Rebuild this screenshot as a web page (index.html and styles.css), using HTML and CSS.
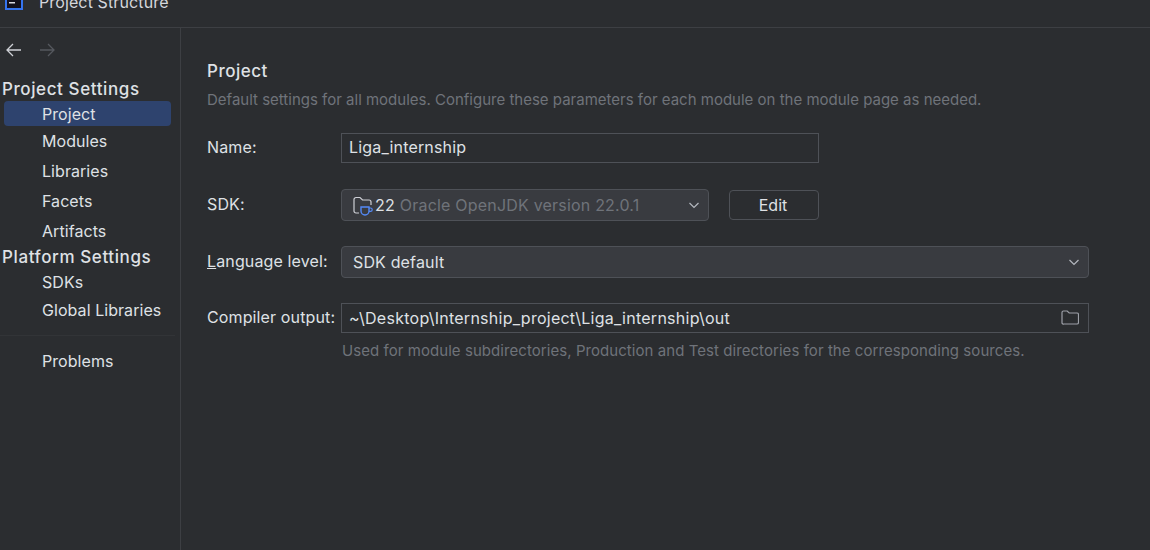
FILE: index.html
```html
<!DOCTYPE html>
<html lang="en">
<head>
    <meta charset="UTF-8">
    <meta name="viewport" content="width=device-width, initial-scale=1.0">
    <title>Project Structure</title>
    <link rel="stylesheet" href="styles.css">
</head>
<body>
    <header class="title-bar">
        <svg class="app-icon" width="18" height="18" viewBox="0 0 18 18">
            <rect x="1" y="1" width="16" height="16" fill="#14101c" stroke="#3574f0" stroke-width="2"/>
            <rect x="4" y="3" width="3" height="3" fill="#d8d8e0"/>
            <rect x="8" y="3" width="3" height="3" fill="#d8d8e0"/>
            <rect x="4" y="10" width="6" height="1.500" fill="#d8d8e0"/>
        </svg>
        <span class="title-text">Project Structure</span>
    </header>

    <div class="dialog">
        <aside class="sidebar">
            <div class="history">
                <svg width="18" height="18" viewBox="0 0 18 18" fill="none" stroke="#cfd1d6" stroke-width="1.3">
                    <path d="M16 9H2M8 3L2 9l6 6"/>
                </svg>
                <svg width="18" height="18" viewBox="0 0 18 18" fill="none" stroke="#55585e" stroke-width="1.3">
                    <path d="M2 9h14M10 3l6 6-6 6"/>
                </svg>
            </div>
            <h2 class="group-title">Project Settings</h2>
            <a class="nav-item selected">Project</a>
            <a class="nav-item">Modules</a>
            <a class="nav-item">Libraries</a>
            <a class="nav-item">Facets</a>
            <a class="nav-item">Artifacts</a>
            <h2 class="group-title platform-title">Platform Settings</h2>
            <a class="nav-item tight first-tight">SDKs</a>
            <a class="nav-item tight">Global Libraries</a>
            <hr class="nav-sep">
            <a class="nav-item">Problems</a>
        </aside>

        <main class="content">
            <h1 class="page-title">Project</h1>
            <p class="hint">Default settings for all modules. Configure these parameters for each module on the module page as needed.</p>

            <div class="form">
                <label class="row-label row-name name-label">Name:</label>
                <div class="field row-name name-field">Liga_internship</div>

                <label class="row-label row-sdk">SDK:</label>
                <div class="sdk-line row-sdk">
                    <div class="combo sdk-combo">
                        <svg class="sdk-icon" width="22" height="20" viewBox="0 0 22 20" fill="none">
                            <path d="M6 18H3a2 2 0 0 1-2-2V4.500a2 2 0 0 1 2-2h4l2.500 2.500H16a2 2 0 0 1 2 2V10" stroke="#ced0d6" stroke-width="1.200"/>
                            <path d="M8 12h8v4a4 4 0 0 1-4 4a4 4 0 0 1-4-4z" fill="#393b40" stroke="#548af7" stroke-width="1.400"/>
                            <path d="M16 13h1.500a1.700 1.700 0 0 1 0 3.400H16" stroke="#548af7" stroke-width="1.200"/>
                        </svg>
                        <span class="sdk-version">22</span>
                        <span class="sdk-name">Oracle OpenJDK version 22.0.1</span>
                        <svg class="chevron" width="12" height="12" viewBox="0 0 12 12" fill="none" stroke="#b4b8bf" stroke-width="1.200">
                            <path d="M1.500 4l4.500 4.500L10.500 4"/>
                        </svg>
                    </div>
                    <button class="edit-button">Edit</button>
                </div>

                <label class="row-label row-lang"><u>L</u>anguage level:</label>
                <div class="combo row-lang lang-combo">
                    <span>SDK default</span>
                    <svg class="chevron" width="12" height="12" viewBox="0 0 12 12" fill="none" stroke="#b4b8bf" stroke-width="1.200">
                        <path d="M1.500 4l4.500 4.500L10.500 4"/>
                    </svg>
                </div>

                <label class="row-label row-out">Compiler output:</label>
                <div class="field row-out out-field">
                    <span>~\Desktop\Internship_project\Liga_internship\out</span>
                    <svg width="18" height="18" viewBox="0 0 18 18" fill="none" stroke="#9da0a8" stroke-width="1.200">
                        <path d="M1 3.500A1.500 1.500 0 0 1 2.500 2h3.700l2 2h7.800a1.500 1.500 0 0 1 1.500 1.500v8a1.500 1.500 0 0 1-1.500 1.500h-13A1.500 1.500 0 0 1 1 14z"/>
                    </svg>
                </div>

                <p class="hint out-hint">Used for module subdirectories, Production and Test directories for the corresponding sources.</p>
            </div>
        </main>
    </div>
</body>
</html>
```

FILE: styles.css
```css
html, body {
    height: 100%;
}
body {
    margin: 0;
    overflow: hidden;
    background-color: #2b2d30;
    color: #dfe1e5;
    font-family: Inter, "Noto Sans", sans-serif;
    font-size: 16px;
    display: flex;
    flex-direction: column;
}
.title-bar {
    height: 27px;
    flex: none;
    display: flex;
    align-items: flex-start;
    gap: 16px;
    padding-left: 5px;
    border-bottom: 1px solid #3d3f43;
    overflow: hidden;
}
.app-icon {
    flex: none;
    margin-top: -8px;
}
.title-text {
    margin-top: -8px;
    font-size: 16px;
    line-height: 20px;
    letter-spacing: 0.12px;
    color: #d5d7dc;
}
.dialog {
    flex: 1;
    display: flex;
    min-height: 0;
}
.sidebar {
    width: 181px;
    flex: none;
    box-sizing: border-box;
    border-right: 1px solid #3d3f43;
    padding: 12px 9px 0 4px;
    display: flex;
    flex-direction: column;
}
.history {
    height: 20px;
    display: flex;
    align-items: center;
    gap: 15px;
    margin-bottom: 19px;
    padding-left: 1px;
}
.group-title {
    margin: 0 0 0 -2px;
    font-size: 17px;
    font-weight: 500;
    line-height: 20px;
    height: 20px;
    letter-spacing: 0.6px;
    color: #dfe1e5;
}
.platform-title {
    margin-top: 1px;
}
.nav-item {
    height: 30px;
    line-height: 30px;
    padding-left: 38px;
    letter-spacing: 0.06px;
    color: #dfe1e5;
    border-radius: 4px;
    white-space: nowrap;
}
.nav-item.selected {
    height: 25px;
    line-height: 27px;
    margin-top: 2px;
    margin-bottom: 0;
    background-color: #2e436e;
}
.nav-item.tight {
    height: 28px;
    line-height: 28px;
}
.nav-item.first-tight {
    margin-top: 1px;
}
.nav-sep {
    align-self: stretch;
    margin: 11px -4px 10px -4px;
    border: none;
    border-top: 1px solid #323437;
}
.content {
    flex: 1;
    padding: 33px 0 0 26px;
    min-width: 0;
}
.page-title {
    margin: 0;
    font-size: 17px;
    font-weight: 500;
    line-height: 20px;
    letter-spacing: 0.5px;
    color: #dfe1e5;
}
.hint {
    margin: 9px 0 0;
    font-size: 15px;
    line-height: 20px;
    color: #6f737a;
}
.form {
    width: 882px;
    margin-top: 23px;
    display: grid;
    grid-template-columns: 134px 1fr;
    grid-template-rows: 31px 32px 32px 30px auto;
    row-gap: 25px;
    align-items: center;
}
.row-name { grid-row: 1; }
.row-sdk { grid-row: 2; }
.row-lang { grid-row: 3; }
.row-out { grid-row: 4; }
.row-label {
    grid-column: 1;
    margin-bottom: 2px;
    letter-spacing: 0.13px;
    color: #dfe1e5;
    white-space: nowrap;
}
.row-label.name-label {
    margin-bottom: 3px;
}
.field {
    grid-column: 2;
    box-sizing: border-box;
    height: 30px;
    display: flex;
    align-items: center;
    justify-content: space-between;
    padding: 0 9px 0 7px;
    border: 1px solid #4e5157;
    background-color: #2b2d30;
    letter-spacing: 0.26px;
}
.name-field {
    width: 478px;
    align-self: start;
    padding-bottom: 3px;
    letter-spacing: 0.18px;
}
.sdk-line {
    grid-column: 2;
    display: flex;
    align-items: center;
    gap: 20px;
}
.combo {
    grid-column: 2;
    box-sizing: border-box;
    height: 32px;
    display: flex;
    align-items: center;
    justify-content: space-between;
    padding: 0 8px 0 11px;
    border: 1px solid #4e5157;
    border-radius: 4px;
    background-color: #393b40;
    letter-spacing: 0.15px;
}
.sdk-combo {
    width: 368px;
    justify-content: flex-start;
}
.sdk-icon {
    flex: none;
    overflow: visible;
}
.sdk-version {
    margin-right: 5px;
}
.sdk-name {
    color: #6f737a;
    white-space: nowrap;
    letter-spacing: 0.2px;
}
.sdk-combo .chevron {
    margin-left: auto;
}
.edit-button {
    width: 90px;
    height: 30px;
    padding: 0 2px 0 0;
    font: inherit;
    color: #dfe1e5;
    background-color: #2b2d30;
    border: 1px solid #4e5157;
    border-radius: 4px;
}
.out-hint {
    grid-column: 2;
    grid-row: 5;
    margin: -17px 0 0 1px;
    letter-spacing: 0.06px;
}
```
